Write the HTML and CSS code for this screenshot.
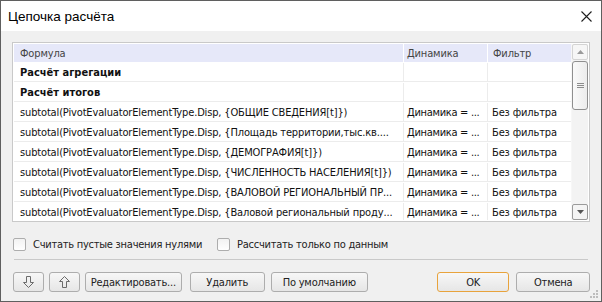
FILE: index.html
```html
<!DOCTYPE html>
<html lang="ru">

<head>
    <meta charset="UTF-8">
    <title>Цепочка расчёта</title>
    <link rel="stylesheet" href="styles.css">
</head>

<body>
    <div class="window">
        <div class="titlebar">
            <span class="title">Цепочка расчёта</span>
            <svg class="close" width="11" height="11" viewBox="0 0 11 11">
                <path d="M0.5 0.5 L10.5 10.5 M10.5 0.5 L0.5 10.5" stroke="#1e1e1e" stroke-width="1.1" fill="none"/>
            </svg>
        </div>

        <div class="content">
            <div class="grid">
                <div class="table">
                    <div class="row head">
                        <div class="cell c1">Формула</div>
                        <div class="cell c2">Динамика</div>
                        <div class="cell c3">Фильтр</div>
                    </div>
                    <div class="row">
                        <div class="cell c1 bold">Расчёт агрегации</div>
                        <div class="cell c2"></div>
                        <div class="cell c3"></div>
                    </div>
                    <div class="row">
                        <div class="cell c1 bold">Расчёт итогов</div>
                        <div class="cell c2"></div>
                        <div class="cell c3"></div>
                    </div>
                    <div class="row">
                        <div class="cell c1">subtotal(PivotEvaluatorElementType.Disp, {ОБЩИЕ СВЕДЕНИЯ[t]})</div>
                        <div class="cell c2">Динамика = ...</div>
                        <div class="cell c3">Без фильтра</div>
                    </div>
                    <div class="row">
                        <div class="cell c1">subtotal(PivotEvaluatorElementType.Disp, {Площадь территории,тыс.кв....</div>
                        <div class="cell c2">Динамика = ...</div>
                        <div class="cell c3">Без фильтра</div>
                    </div>
                    <div class="row">
                        <div class="cell c1">subtotal(PivotEvaluatorElementType.Disp, {ДЕМОГРАФИЯ[t]})</div>
                        <div class="cell c2">Динамика = ...</div>
                        <div class="cell c3">Без фильтра</div>
                    </div>
                    <div class="row">
                        <div class="cell c1">subtotal(PivotEvaluatorElementType.Disp, {ЧИСЛЕННОСТЬ НАСЕЛЕНИЯ[t]})</div>
                        <div class="cell c2">Динамика = ...</div>
                        <div class="cell c3">Без фильтра</div>
                    </div>
                    <div class="row">
                        <div class="cell c1">subtotal(PivotEvaluatorElementType.Disp, {ВАЛОВОЙ РЕГИОНАЛЬНЫЙ ПР...</div>
                        <div class="cell c2">Динамика = ...</div>
                        <div class="cell c3">Без фильтра</div>
                    </div>
                    <div class="row">
                        <div class="cell c1">subtotal(PivotEvaluatorElementType.Disp, {Валовой региональный проду...</div>
                        <div class="cell c2">Динамика = ...</div>
                        <div class="cell c3">Без фильтра</div>
                    </div>
                </div>

                <div class="scrollbar">
                    <div class="sb-btn">
                        <svg width="7" height="4" viewBox="0 0 7 4"><path d="M3.5 0 L7 4 L0 4 Z" fill="#9a9a9a"/></svg>
                    </div>
                    <div class="sb-thumb">
                        <svg width="7" height="7" viewBox="0 0 7 7"><path d="M0 1.5 H7 M0 3.5 H7 M0 5.5 H7" stroke="#8c8c8c" stroke-width="1"/></svg>
                    </div>
                    <div class="sb-track"></div>
                    <div class="sb-btn sb-down">
                        <svg width="7" height="4" viewBox="0 0 7 4"><path d="M0 0 L7 0 L3.5 4 Z" fill="#555"/></svg>
                    </div>
                </div>
            </div>

            <div class="options">
                <label class="check"><span class="box"></span>Считать пустые значения нулями</label>
                <label class="check"><span class="box"></span>Рассчитать только по данным</label>
            </div>

            <div class="sep"></div>

            <div class="buttons">
                <button class="btn b-icon">
                    <svg width="11" height="12" viewBox="0 0 11 12"><path d="M3.5 0.5 H7.5 V6.5 H10.5 L5.5 11.5 L0.5 6.5 H3.5 Z" fill="none" stroke="#6b6b6b"/></svg>
                </button>
                <button class="btn b-icon">
                    <svg width="11" height="12" viewBox="0 0 11 12"><path d="M3.5 11.5 H7.5 V5.5 H10.5 L5.5 0.5 L0.5 5.5 H3.5 Z" fill="none" stroke="#6b6b6b"/></svg>
                </button>
                <button class="btn b-edit">Редактировать...</button>
                <button class="btn b-del">Удалить</button>
                <button class="btn b-def">По умолчанию</button>
                <button class="btn b-ok">OK</button>
                <button class="btn b-cancel">Отмена</button>
            </div>
        </div>

        <svg class="grip" width="9" height="9" viewBox="0 0 9 9">
            <rect x="6" y="0" width="2" height="2" fill="#bdbdbd"/>
            <rect x="3" y="3" width="2" height="2" fill="#bdbdbd"/>
            <rect x="6" y="3" width="2" height="2" fill="#bdbdbd"/>
            <rect x="0" y="6" width="2" height="2" fill="#bdbdbd"/>
            <rect x="3" y="6" width="2" height="2" fill="#bdbdbd"/>
            <rect x="6" y="6" width="2" height="2" fill="#bdbdbd"/>
        </svg>
    </div>
</body>

</html>
```

FILE: styles.css
```css
:root {
    --color-1: #fff;
    --color-2: #000;
    --color-3: #f0f0f0;
    --color-4: #5f5f5f;
    --color-5: #c9c9c9;
    --color-6: #e6e8f9;
    --color-7: #ececec;
    --color-8: #adadad;
    --color-9: #e8a33c;
    --color-10: #444;
}

body {
    font-family: "DejaVu Sans Condensed", "DejaVu Sans", sans-serif;
    font-size: 11px;
    letter-spacing: -0.15px;
    margin: 0;
    padding: 0;
    background-color: var(--color-1);
}

.window {
    position: relative;
    width: 602px;
    height: 302px;
    box-sizing: border-box;
    border: 1px solid var(--color-4);
    display: flex;
    flex-direction: column;
    background-color: var(--color-3);
}

.titlebar {
    height: 30px;
    flex-shrink: 0;
    background-color: var(--color-1);
    display: flex;
    align-items: center;
    justify-content: space-between;
    padding: 0 9px 0 7px;
}

.title {
    font-family: "Liberation Sans", Arial, sans-serif;
    font-size: 13.5px;
    letter-spacing: 0;
    color: var(--color-2);
}

.content {
    padding: 11px 11px 0 11px;
}

/* grid */

.grid {
    display: flex;
    width: 578px;
    height: 180px;
    box-sizing: border-box;
    border: 1px solid var(--color-5);
    padding: 1px;
    background-color: var(--color-1);
    overflow: hidden;
}

.table {
    width: 557px;
    flex-shrink: 0;
    overflow: hidden;
}

.row {
    display: flex;
    height: 20px;
    box-sizing: border-box;
    padding-top: 1px;
    border-bottom: 1px solid var(--color-7);
}

.row.head {
    height: 18px;
    padding-top: 0;
    border-bottom: none;
    background-color: var(--color-6);
}

.cell {
    box-sizing: border-box;
    padding: 0 3px 0 6px;
    white-space: nowrap;
    overflow: hidden;
    display: flex;
    align-items: center;
    color: #111;
}

.head .cell {
    color: var(--color-10);
    border-right-color: var(--color-1);
}

.c1 {
    width: 390px;
    border-right: 1px solid var(--color-7);
}

.c2 {
    width: 84px;
    padding-left: 3px;
    padding-right: 0;
    letter-spacing: -0.3px;
    border-right: 1px solid var(--color-7);
}

.head .c2 {
    letter-spacing: -0.15px;
}

.c3 {
    width: 83px;
    padding-left: 4px;
}

.head .c3 {
    padding-left: 5px;
}

.bold {
    font-weight: bold;
    letter-spacing: 0;
}

/* scrollbar */

.scrollbar {
    width: 17px;
    display: flex;
    flex-direction: column;
    background-color: #f3f3f3;
    border-left: 1px solid #f7f7f7;
    box-sizing: border-box;
}

.sb-btn {
    height: 16px;
    box-sizing: border-box;
    border: 1px solid #d4d4d4;
    border-radius: 2px;
    background-color: #f6f6f6;
    display: flex;
    align-items: center;
    justify-content: center;
}

.sb-down {
    border-color: #9a9a9a;
    background-color: #f4f4f4;
}

.sb-thumb {
    height: 49px;
    margin-top: 1px;
    box-sizing: border-box;
    border: 1px solid #8f8f8f;
    border-radius: 3px;
    background: linear-gradient(to right, #fafafa, #ececec);
    display: flex;
    align-items: center;
    justify-content: center;
}

.sb-track {
    flex: 1;
}

/* options */

.options {
    display: flex;
    align-items: center;
    height: 14px;
    margin-top: 15px;
    padding-left: 1px;
    letter-spacing: -0.25px;
    color: #222;
}

.check {
    display: flex;
    align-items: center;
    gap: 7px;
    margin-right: 15px;
}

.box {
    width: 13px;
    height: 13px;
    box-sizing: border-box;
    border: 1px solid var(--color-8);
    border-radius: 2px;
    background: linear-gradient(#f2f2f2, #fff);
}

.sep {
    height: 1px;
    margin: 8px 2px 0 2px;
    background-color: var(--color-5);
}

/* buttons */

.buttons {
    display: flex;
    margin-top: 12px;
    padding-left: 1px;
}

.btn {
    height: 20px;
    padding: 0;
    font-family: inherit;
    font-size: 11px;
    letter-spacing: -0.2px;
    color: #222;
    border: 1px solid var(--color-8);
    border-radius: 3px;
    background: linear-gradient(#f7f7f7, #e6e6e6);
    display: flex;
    align-items: center;
    justify-content: center;
}

.b-icon {
    width: 31px;
    margin-right: 5px;
}

.b-edit {
    width: 98px;
    margin-right: 8px;
}

.b-del {
    width: 75px;
    margin-right: 6px;
}

.b-def {
    width: 98px;
    margin-right: 69px;
}

.b-ok {
    width: 73px;
    margin-right: 7px;
    border-color: var(--color-9);
}

.b-cancel {
    width: 74px;
}

.grip {
    position: absolute;
    right: 2px;
    bottom: 2px;
}
```
